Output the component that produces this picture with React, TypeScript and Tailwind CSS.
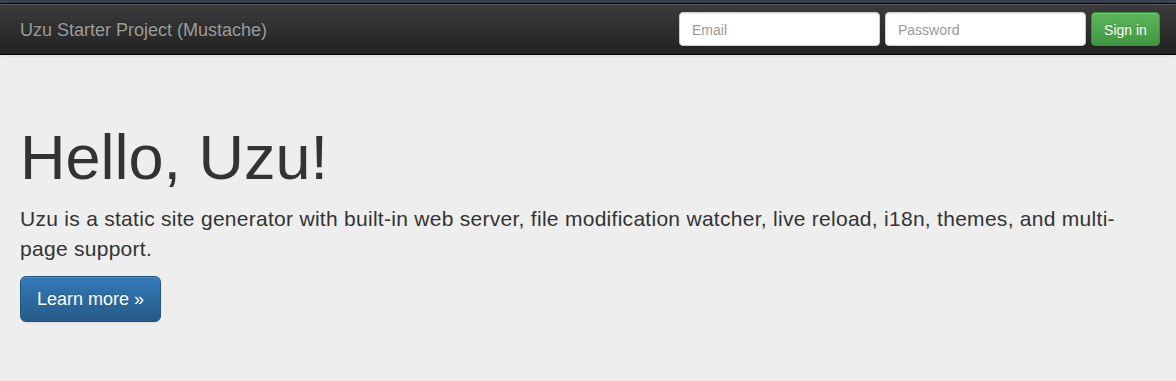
import React from "react";

export default function App() {
  return (
    <div
      className="min-h-[381px] bg-[#eeeeee] text-[#333333]"
      style={{ fontFamily: '"Liberation Sans", Arial, Helvetica, sans-serif' }}
    >
      <div className="h-[3px] bg-[#3b4052]" />
      <nav className="h-[52px] border-y border-[#080808] bg-[linear-gradient(to_bottom,#3c3c3c_0%,#222222_100%)] shadow-[inset_0_1px_0_rgba(255,255,255,0.15),0_1px_5px_rgba(0,0,0,0.075)] flex items-center justify-between pl-[20px] pr-[16px]">
        <a className="text-[18px] leading-[20px] text-[#9d9d9d] pt-[1px] [text-shadow:0_-1px_0_rgba(0,0,0,0.25)]">
          Uzu Starter Project (Mustache)
        </a>
        <form className="flex items-center gap-[5px]">
          <input
            type="text"
            placeholder="Email"
            className="w-[201px] h-[34px] px-[12px] pt-[7px] pb-[5px] text-[14px] leading-[20px] bg-white border border-[#cccccc] rounded-[4px] shadow-[inset_0_1px_1px_rgba(0,0,0,0.075)] placeholder:text-[#999999] text-[#555555] outline-none"
          />
          <input
            type="password"
            placeholder="Password"
            className="w-[201px] h-[34px] px-[12px] pt-[7px] pb-[5px] text-[14px] leading-[20px] bg-white border border-[#cccccc] rounded-[4px] shadow-[inset_0_1px_1px_rgba(0,0,0,0.075)] placeholder:text-[#999999] text-[#555555] outline-none"
          />
          <button
            type="button"
            className="w-[69px] h-[34px] pt-[2px] text-[14px] leading-[20px] text-white rounded-[4px] border border-[#3e8f3e] bg-[linear-gradient(to_bottom,#5cb85c_0%,#419641_100%)] shadow-[inset_0_1px_0_rgba(255,255,255,0.15),0_1px_1px_rgba(0,0,0,0.075)] [text-shadow:0_-1px_0_rgba(0,0,0,0.2)]"
          >
            Sign in
          </button>
        </form>
      </nav>
      <div className="pt-[68px] pb-[48px] px-[20px]">
        <h1 className="text-[63px] leading-[1.1] mb-[12px] font-normal">Hello, Uzu!</h1>
        <p className="text-[21px] leading-[30px] mb-[12px] max-w-[1136px] tracking-[0.28px]">
          Uzu is a static site generator with built-in web server, file modification watcher, live reload, i18n, themes, and multi-page support.
        </p>
        <button
          type="button"
          className="w-[141px] h-[46px] text-[18px] leading-[24px] text-white rounded-[6px] border border-[#245580] bg-[linear-gradient(to_bottom,#337ab7_0%,#265a88_100%)] shadow-[inset_0_1px_0_rgba(255,255,255,0.15),0_1px_1px_rgba(0,0,0,0.075)] [text-shadow:0_-1px_0_rgba(0,0,0,0.2)]"
        >
          Learn more »
        </button>
      </div>
    </div>
  );
}
